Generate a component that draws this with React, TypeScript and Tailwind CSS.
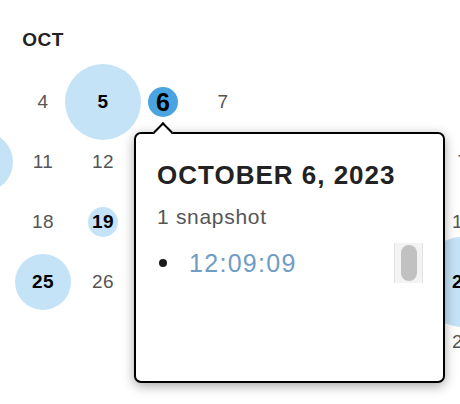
import React from 'react'

interface Snap {
  size: number
  selected?: boolean
}

interface MonthData {
  label: string
  offset: number
  days: number
  snaps: Record<number, Snap>
}

const months: MonthData[] = [
  {
    label: 'OCT',
    offset: 0,
    days: 31,
    snaps: {
      5: { size: 76 },
      6: { size: 30, selected: true },
      10: { size: 60 },
      19: { size: 30 },
      25: { size: 56 },
    },
  },
  {
    label: 'NOV',
    offset: 3,
    days: 30,
    snaps: { 21: { size: 90 } },
  },
]

const Day: React.FC<{ day: number; snap?: Snap }> = ({ day, snap }) => {
  let textClass = 'relative text-[19px] leading-[20px] text-[#555] tracking-[0.5px]'
  if (snap) textClass = 'relative text-[19px] leading-[20px] font-bold text-black tracking-[0.5px]'
  if (snap?.selected) textClass = 'relative text-[25px] leading-[26px] font-bold text-black'

  return (
    <div className="relative flex items-center justify-center">
      {snap && (
        <span
          className={
            snap.selected
              ? 'absolute left-1/2 top-1/2 -translate-x-1/2 -translate-y-1/2 rounded-full bg-[#4aa4e2]'
              : 'absolute left-1/2 top-1/2 -translate-x-1/2 -translate-y-1/2 rounded-full bg-[#c4e3f6]'
          }
          style={{ width: snap.size, height: snap.size }}
        />
      )}
      <span className={textClass}>{day}</span>
    </div>
  )
}

const Month: React.FC<{ month: MonthData }> = ({ month }) => {
  const cells: (number | null)[] = []
  for (let i = 0; i < month.offset; i++) cells.push(null)
  for (let d = 1; d <= month.days; d++) cells.push(d)

  return (
    <div className="w-[420px] shrink-0">
      <div className="text-center text-[19px] leading-[20px] font-bold text-[#222] tracking-[0.5px]">
        {month.label}
      </div>
      <div className="mt-[22px] grid grid-cols-[repeat(7,60px)] auto-rows-[60px]">
        {cells.map((d, index) =>
          d === null ? <div key={index} /> : <Day key={index} day={d} snap={month.snaps[d]} />
        )}
      </div>
    </div>
  )
}

export default function App() {
  return (
    <div className="relative w-[460px] h-[404px] overflow-hidden bg-white pt-[30px] font-['Liberation_Sans',Arial,sans-serif]">
      <div className="flex gap-[60px] ml-[-167px]">
        {months.map((m) => (
          <Month key={m.label} month={m} />
        ))}
      </div>

      <div className="absolute left-[134px] top-[132px] w-[311px] h-[251px] rounded-[7px] border-2 border-black bg-white pl-[21px] pt-[26px] shadow-[0_3px_12px_rgba(0,0,0,0.35)]">
        <span className="absolute left-[20px] top-[-9px] w-[14px] h-[14px] rotate-45 bg-white border-l-2 border-t-2 border-black" />
        <div className="text-[26px] leading-[30px] font-bold text-[#222] tracking-[1px]">
          OCTOBER 6, 2023
        </div>
        <div className="mt-[15px] text-[21px] leading-[24px] text-[#555] tracking-[0.7px]">
          1 snapshot
        </div>
        <div className="mt-[14px] flex items-center h-[40px]">
          <span className="ml-[2px] w-[8px] h-[8px] rounded-full bg-[#1a1a1a]" />
          <span className="ml-[22px] text-[25px] leading-[30px] text-[#6f9cc4] tracking-[1.3px]">
            12:09:09
          </span>
          <div className="ml-auto mr-[20px] flex h-[40px] w-[29px] items-center justify-center border-x border-[#e2e2e2] bg-[#f3f3f3]">
            <div className="h-[36px] w-[16px] rounded-full bg-[#c1c1c1]" />
          </div>
        </div>
      </div>
    </div>
  )
}
